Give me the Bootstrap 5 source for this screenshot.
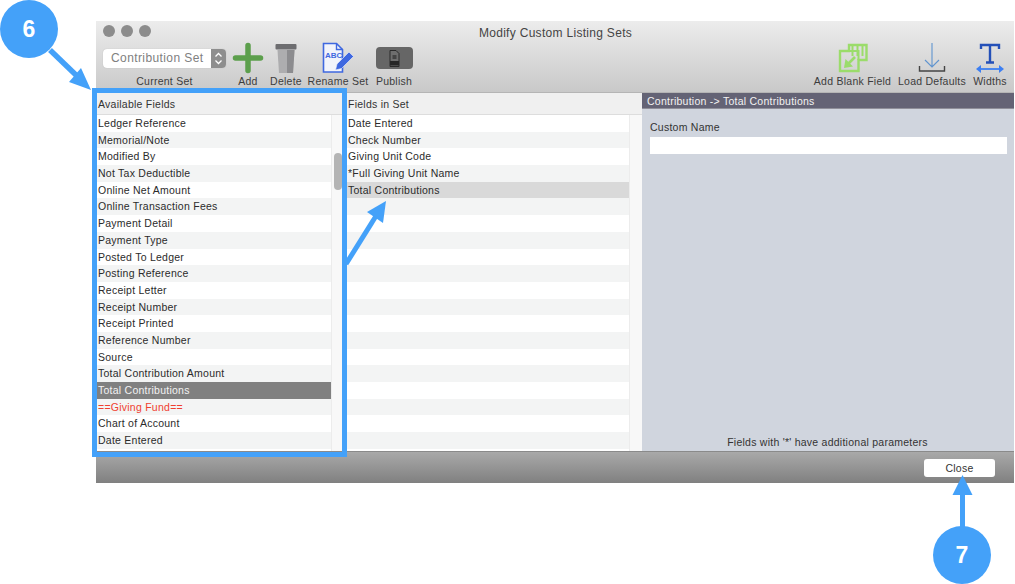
<!DOCTYPE html>
<html lang="en">
<head>
  <meta charset="UTF-8">
  <title>Modify Custom Listing Sets</title>
  <link href="https://cdn.jsdelivr.net/npm/bootstrap@5.3.0/dist/css/bootstrap.min.css" rel="stylesheet">
  <style>
    body {
      background: #fff;
      font-family: "Liberation Sans", Arial, sans-serif;
      font-size: 10.5px;
      letter-spacing: .25px;
      color: #2b2b2b;
      width: 1015px;
      height: 584px;
      overflow: hidden;
      position: relative;
    }
    .app-window { margin: 21px 0 0 96px; width: 918px; height: 462px; }
    .top-bar { height: 72px; background: linear-gradient(#ececec, #c9c9c9); border-bottom: 1px solid #b5b5b5; position: relative; }
    .title-row { height: 20px; padding: 4px 0 0 7px; }
    .light { width: 12px; height: 12px; border-radius: 50%; background: #8c8c8c; margin-right: 6px; }
    .win-title { flex: 1; text-align: center; font-size: 12px; color: #444; margin-right: 54px; margin-top: -1px; padding-right: 6px; letter-spacing: .3px; }
    .tool-row { height: 52px; padding-left: 7px; }
    .tool { display: flex; flex-direction: column; align-items: center; color: #3c3c3c; }
    .tool-art { height: 34px; display: flex; align-items: center; justify-content: center; }
    .tool-text { line-height: 12px; white-space: nowrap; }
    .set-picker { width: 123px; height: 19px; margin-top: 1px; background: #fff; border-radius: 4px; overflow: hidden; font-size: 12px; letter-spacing: .4px; color: #808080; box-shadow: 0 0 1px #aaa; }
    .set-picker span { flex: 1; padding-left: 8px; line-height: 19px; white-space: nowrap; }
    .set-stepper { width: 15px; background: #8e8e8e; }
    .pub-btn { width: 37px; height: 22px; background: #666; border-radius: 4px; }
    .main-area { height: 358px; }
    .pane-a { width: 249px; }
    .pane-b { width: 297px; }
    .pane-c { flex: 1; background: #d0d5de; }
    .pane-head { height: 22px; line-height: 23px; background: #f0f0f0; border-bottom: 1px solid #ddd; padding-left: 2px; flex: none; color: #333; }
    .pane-b .pane-head { padding-left: 3px; }
    .list-wrap { flex: 1; min-height: 0; background: #fff; }
    .field-list { flex: 1; background: transparent; border-radius: 0; }
    .field-list .list-group-item { height: 16.7px; line-height: 16.7px; padding: 0 0 0 2px; border: 0; font-size: 10.5px; color: #2b2b2b; background: #fff; white-space: nowrap; }
    .pane-b .field-list .list-group-item { padding-left: 3px; }
    .field-list .list-group-item:nth-child(even) { background: #f3f4f4; }
    .field-list .list-group-item.row-dark { background: #808080; color: #f2f2f2; }
    .field-list .list-group-item.row-soft { background: #d9d9d9; }
    .field-list .list-group-item.row-red { color: #f0402f; }
    .track { width: 14px; flex: none; background: #f8f8f8; border-left: 1px solid #ececec; }
    .thumb { width: 8px; height: 37px; margin: 38px 0 0 2px; background: #b4b4b4; border-radius: 4px; }
    .pane-b .track { width: 13px; }
    .detail-head { height: 16px; line-height: 16px; background: #646375; color: #f2f2f2; padding-left: 5px; border-bottom: 1px solid #8f8f99; }
    .detail-body { flex: 1; padding: 11px 7px 0 8px; }
    .detail-label { line-height: 14px; margin-bottom: 3px; color: #333; }
    .detail-input { height: 17px; min-height: 0; padding: 0; border: 0; border-radius: 0; }
    .detail-note { text-align: center; height: 18px; line-height: 18px; color: #333; padding-right: 1px; }
    .foot-bar { height: 32px; background: linear-gradient(#a9a9a9, #808080); border-top: 1px solid #8a8a8a; padding: 7px 19px 0 0; }
    .close-btn { width: 71px; height: 18px; padding: 0; line-height: 17px; font-size: 10.5px; letter-spacing: .25px; background: #fff; border: 0; border-radius: 3px; color: #333; }
    .mark-layer { position: absolute; left: 0; top: 0; }
    .num-text { font-family: "Liberation Sans", Arial, sans-serif; font-weight: 700; font-size: 23px; fill: #fff; letter-spacing: 0; }
  </style>
</head>
<body>
  <div class="app-window d-flex flex-column">
    <div class="top-bar flex-none">
      <div class="title-row d-flex align-items-start">
        <div class="light"></div><div class="light"></div><div class="light"></div>
        <div class="win-title">Modify Custom Listing Sets</div>
      </div>
      <div class="tool-row d-flex">
        <div class="tool" style="width:123px">
          <div class="tool-art">
            <div class="set-picker d-flex"><span>Contribution Set</span>
              <div class="set-stepper">
                <svg width="15" height="19" viewBox="0 0 15 19"><path d="M4.500 7.500 7.500 4.500 10.500 7.500M4.500 11.500 7.500 14.500 10.500 11.500" fill="none" stroke="#fff" stroke-width="1.300"/></svg>
              </div>
            </div>
          </div>
          <div class="tool-text">Current Set</div>
        </div>
        <div class="tool" style="width:44px">
          <div class="tool-art">
            <svg width="32" height="32" viewBox="0 0 32 32"><path d="M16 3.500v25M3.500 16h25" stroke="#5c9f4c" stroke-width="5.500" stroke-linecap="round"/></svg>
          </div>
          <div class="tool-text">Add</div>
        </div>
        <div class="tool" style="width:32px">
          <div class="tool-art">
            <svg width="24" height="32" viewBox="0 0 24 32"><path d="M3.500 8h17l-1.500 23H5z" fill="#adadaf"/><path d="M13 8h7.500l-1.500 23h-6z" fill="#8c8c8f"/><rect x="1.500" y="2" width="21" height="5.500" rx="1" fill="#6d6d70"/></svg>
          </div>
          <div class="tool-text">Delete</div>
        </div>
        <div class="tool" style="width:72px">
          <div class="tool-art">
            <svg width="32" height="34" viewBox="0 0 32 34">
              <path d="M1.500 2.500h13l6 6v22.500h-19z" fill="#f2f4fb" stroke="#3f68e0" stroke-width="1.600"/>
              <path d="M14.500 2.500v6h6" fill="none" stroke="#3f68e0" stroke-width="1.400"/>
              <text x="3" y="16.500" font-size="8" font-weight="700" fill="#3f68e0" letter-spacing="0">ABC</text>
              <path d="M13.500 29l1.500-6 12-12 4.500 4.500-12 12z" fill="#3f68e0" stroke="#f2f4fb" stroke-width=".6"/>
            </svg>
          </div>
          <div class="tool-text">Rename Set</div>
        </div>
        <div class="tool" style="width:40px">
          <div class="tool-art">
            <div class="pub-btn d-flex align-items-center justify-content-center">
              <svg width="11" height="17" viewBox="0 0 11 17"><path d="M1 .5h6l3 3v13H1z" fill="#6e6e6e" stroke="#2a2a2a" stroke-width="1"/><rect x="1" y="11" width="9" height="4.500" fill="#262626"/><rect x="3.500" y="5" width="4" height="4" fill="#444"/></svg>
            </div>
          </div>
          <div class="tool-text">Publish</div>
        </div>
        <div class="tool ms-auto" style="width:75px">
          <div class="tool-art">
            <svg width="32" height="32" viewBox="0 0 32 32">
              <path d="M3 9H12V3H29.500V18H21.500V29H3z" fill="none" stroke="#9bdc6b" stroke-width="2.400"/>
              <path d="M12 9H21.500V18M15.500 3V14M20.500 3V14M25.500 3V14" fill="none" stroke="#9bdc6b" stroke-width="2"/>
              <path d="M18 15 11 22" stroke="#9bdc6b" stroke-width="2.600"/>
              <path d="M7 26 8.500 17 16 24.500z" fill="#9bdc6b"/>
            </svg>
          </div>
          <div class="tool-text">Add Blank Field</div>
        </div>
        <div class="tool" style="width:68px;margin-left:8px">
          <div class="tool-art">
            <svg width="30" height="32" viewBox="0 0 30 32">
              <path d="M15 1v24M8 18l7 7 7-7" fill="none" stroke="#5f94cf" stroke-width="1.100"/>
              <path d="M2.500 24v5h25v-5" fill="none" stroke="#444" stroke-width="1.400"/>
            </svg>
          </div>
          <div class="tool-text">Load Defaults</div>
        </div>
        <div class="tool" style="width:34px;margin-left:7px;margin-right:7px">
          <div class="tool-art">
            <svg width="30" height="32" viewBox="0 0 30 32">
              <path d="M6 7V3h18v4M15 3v18M11 20.500h8" fill="none" stroke="#2450b8" stroke-width="2.400"/>
              <path d="M3 27h24" stroke="#3d7ff2" stroke-width="1.800"/>
              <path d="M1 27l5-4v8zM29 27l-5-4v8z" fill="#3d7ff2"/>
            </svg>
          </div>
          <div class="tool-text">Widths</div>
        </div>
      </div>
    </div>

    <div class="main-area d-flex">
      <div class="pane-a d-flex flex-column">
        <div class="pane-head">Available Fields</div>
        <div class="list-wrap d-flex">
          <ul class="list-group list-group-flush field-list">
            <li class="list-group-item">Ledger Reference</li>
            <li class="list-group-item">Memorial/Note</li>
            <li class="list-group-item">Modified By</li>
            <li class="list-group-item">Not Tax Deductible</li>
            <li class="list-group-item">Online Net Amount</li>
            <li class="list-group-item">Online Transaction Fees</li>
            <li class="list-group-item">Payment Detail</li>
            <li class="list-group-item">Payment Type</li>
            <li class="list-group-item">Posted To Ledger</li>
            <li class="list-group-item">Posting Reference</li>
            <li class="list-group-item">Receipt Letter</li>
            <li class="list-group-item">Receipt Number</li>
            <li class="list-group-item">Receipt Printed</li>
            <li class="list-group-item">Reference Number</li>
            <li class="list-group-item">Source</li>
            <li class="list-group-item">Total Contribution Amount</li>
            <li class="list-group-item row-dark">Total Contributions</li>
            <li class="list-group-item row-red">==Giving Fund==</li>
            <li class="list-group-item">Chart of Account</li>
            <li class="list-group-item">Date Entered</li>
          </ul>
          <div class="track"><div class="thumb"></div></div>
        </div>
      </div>
      <div class="pane-b d-flex flex-column">
        <div class="pane-head">Fields in Set</div>
        <div class="list-wrap d-flex">
          <ul class="list-group list-group-flush field-list">
            <li class="list-group-item">Date Entered</li>
            <li class="list-group-item">Check Number</li>
            <li class="list-group-item">Giving Unit Code</li>
            <li class="list-group-item">*Full Giving Unit Name</li>
            <li class="list-group-item row-soft">Total Contributions</li>
            <li class="list-group-item"></li><li class="list-group-item"></li><li class="list-group-item"></li>
            <li class="list-group-item"></li><li class="list-group-item"></li><li class="list-group-item"></li>
            <li class="list-group-item"></li><li class="list-group-item"></li><li class="list-group-item"></li>
            <li class="list-group-item"></li><li class="list-group-item"></li><li class="list-group-item"></li>
            <li class="list-group-item"></li><li class="list-group-item"></li><li class="list-group-item"></li>
          </ul>
          <div class="track"></div>
        </div>
      </div>
      <div class="pane-c d-flex flex-column">
        <div class="detail-head">Contribution -&gt; Total Contributions</div>
        <div class="detail-body">
          <div class="detail-label">Custom Name</div>
          <input type="text" class="form-control detail-input">
        </div>
        <div class="detail-note">Fields with '*' have additional parameters</div>
      </div>
    </div>

    <div class="foot-bar d-flex justify-content-end align-items-start">
      <button type="button" class="btn close-btn">Close</button>
    </div>
  </div>

  <svg class="mark-layer" width="1015" height="584" viewBox="0 0 1015 584">
    <rect x="94.500" y="90.500" width="250" height="364" fill="none" stroke="#44a1f9" stroke-width="5"/>
    <circle cx="29" cy="29" r="29" fill="#44a1f9"/>
    <text class="num-text" x="29" y="37" text-anchor="middle">6</text>
    <path d="M50 50 77 76" stroke="#44a1f9" stroke-width="5.500"/>
    <path d="M91 90 69 82 81 68z" fill="#44a1f9"/>
    <path d="M346 264 376 216" stroke="#44a1f9" stroke-width="5"/>
    <path d="M386 201 383 223 367 212z" fill="#44a1f9"/>
    <circle cx="962" cy="555" r="29" fill="#44a1f9"/>
    <text class="num-text" x="962" y="563" text-anchor="middle">7</text>
    <path d="M962.500 494V527" stroke="#44a1f9" stroke-width="5"/>
    <path d="M962.500 475 972.500 495H952.500z" fill="#44a1f9"/>
  </svg>
</body>
</html>
